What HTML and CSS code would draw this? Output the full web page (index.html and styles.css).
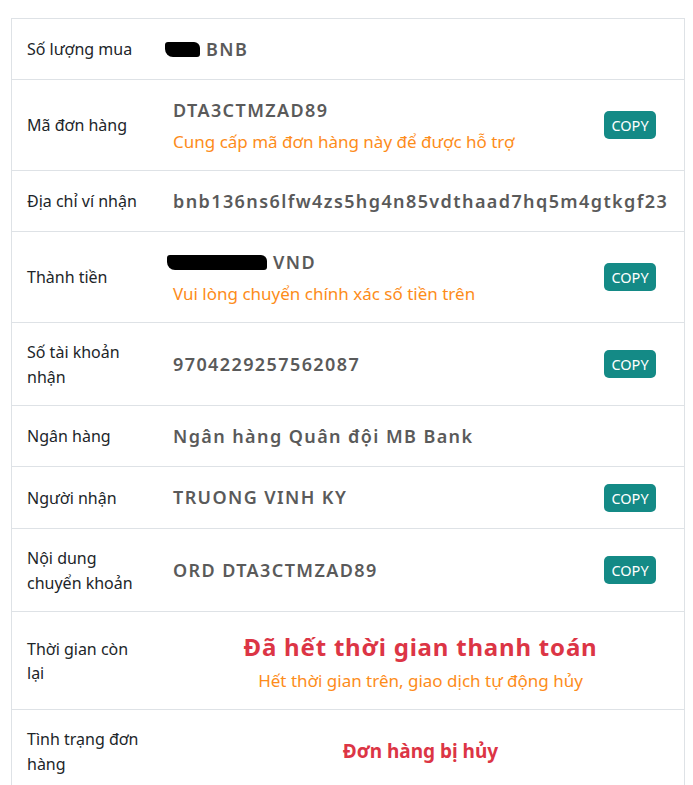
FILE: index.html
```html
<!DOCTYPE html>
<html lang="vi">
<head>
  <meta charset="UTF-8">
  <title>Chi tiết đơn hàng</title>
  <meta name="viewport" content="width=device-width, initial-scale=1.0">
  <link rel="stylesheet" href="styles.css">
</head>
<body>
  <div class="order-box">
    <div class="row">
      <div class="label">Số lượng mua</div>
      <div class="value">
        <div class="main-text"><span class="blot blot-short"></span> BNB</div>
      </div>
    </div>
    <div class="row">
      <div class="label">Mã đơn hàng</div>
      <div class="value">
        <div>
          <div class="main-text">DTA3CTMZAD89</div>
          <div class="hint">Cung cấp mã đơn hàng này để được hỗ trợ</div>
        </div>
        <button class="copy-btn">COPY</button>
      </div>
    </div>
    <div class="row">
      <div class="label">Địa chỉ ví nhận</div>
      <div class="value">
        <div class="main-text">bnb136ns6lfw4zs5hg4n85vdthaad7hq5m4gtkgf23</div>
      </div>
    </div>
    <div class="row">
      <div class="label">Thành tiền</div>
      <div class="value">
        <div>
          <div class="main-text"><span class="blot blot-long"></span> VND</div>
          <div class="hint">Vui lòng chuyển chính xác số tiền trên</div>
        </div>
        <button class="copy-btn">COPY</button>
      </div>
    </div>
    <div class="row">
      <div class="label">Số tài khoản nhận</div>
      <div class="value">
        <div class="main-text">9704229257562087</div>
        <button class="copy-btn">COPY</button>
      </div>
    </div>
    <div class="row">
      <div class="label">Ngân hàng</div>
      <div class="value">
        <div class="main-text">Ngân hàng Quân đội MB Bank</div>
      </div>
    </div>
    <div class="row">
      <div class="label">Người nhận</div>
      <div class="value">
        <div class="main-text">TRUONG VINH KY</div>
        <button class="copy-btn">COPY</button>
      </div>
    </div>
    <div class="row">
      <div class="label">Nội dung chuyển khoản</div>
      <div class="value">
        <div class="main-text">ORD DTA3CTMZAD89</div>
        <button class="copy-btn">COPY</button>
      </div>
    </div>
    <div class="row">
      <div class="label">Thời gian còn lại</div>
      <div class="value center">
        <div>
          <div class="expired">Đã hết thời gian thanh toán</div>
          <div class="hint">Hết thời gian trên, giao dịch tự động hủy</div>
        </div>
      </div>
    </div>
    <div class="row">
      <div class="label">Tình trạng đơn hàng</div>
      <div class="value center">
        <div class="cancelled">Đơn hàng bị hủy</div>
      </div>
    </div>
  </div>
</body>
</html>
```

FILE: styles.css
```css
html, body {
  margin: 0;
  padding: 0;
  background-color: white;
  color: #212529;
  font-family: 'Noto Sans', 'Open Sans', sans-serif;
  font-size: 16px;
  line-height: 1.5;
}
.order-box {
  margin: 18px 8px 0 11px;
  border: 1px solid #dee2e6;
  border-bottom: none;
}
.row {
  display: grid;
  grid-template-columns: 145px 1fr;
  border-bottom: 1px solid #dee2e6;
}
.label {
  padding: 17px 16px 16px 15px;
  display: flex;
  align-items: center;
  line-height: 24.5px;
}
.value {
  padding: 16.5px 16px;
  display: flex;
  align-items: center;
  justify-content: space-between;
}
.value.center {
  justify-content: center;
  text-align: center;
}
.main-text {
  font-size: 18px;
  font-weight: 600;
  color: #5a5a5a;
  letter-spacing: 1.4px;
  line-height: 27px;
  white-space: nowrap;
}
.hint {
  color: #fd8c1a;
  font-size: 17px;
  line-height: 25px;
  margin-top: 5px;
}
.blot {
  display: inline-block;
  background: black;
  height: 15px;
  vertical-align: -1px;
  border-radius: 3px 6px 3px 8px;
}
.blot-short { width: 35px; margin-left: -8px; }
.blot-long { width: 100px; margin-left: -6px; }
.copy-btn {
  background-color: #148a86;
  color: white;
  border: none;
  border-radius: 5px;
  font-family: inherit;
  font-size: 14.5px;
  width: 52px;
  height: 28px;
  padding: 0;
  margin-right: 12px;
  flex-shrink: 0;
}
.expired {
  color: #dc3545;
  font-size: 24px;
  font-weight: bold;
  letter-spacing: 0.8px;
  line-height: 36px;
}
.expired + .hint {
  margin-top: 3px;
}
.cancelled {
  color: #dc3545;
  font-size: 19px;
  font-weight: bold;
}
```
